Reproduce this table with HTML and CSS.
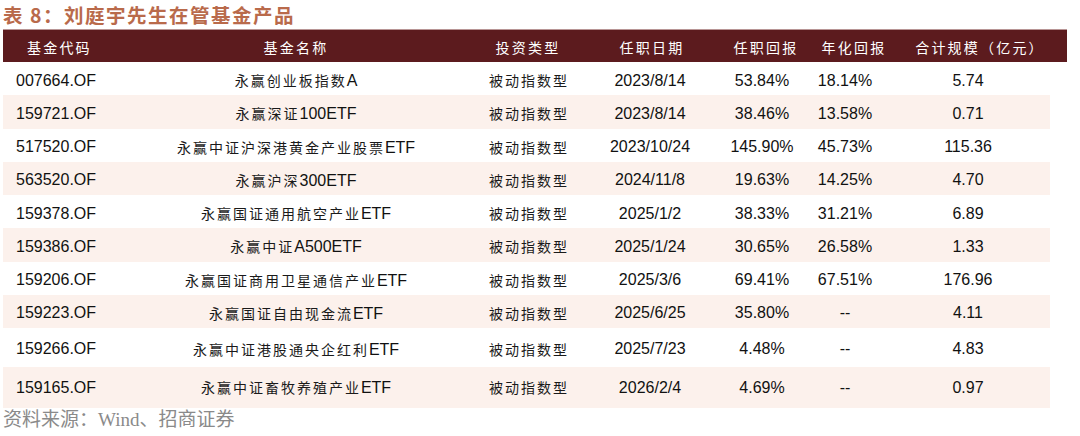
FILE: index.html
```html
<!DOCTYPE html>
<html lang="zh-CN">
<head>
<meta charset="utf-8">
<title>表8</title>
<link rel="stylesheet" href="styles.css">
</head>
<body>
<div class="page">
  <div class="title"><span class="title-no">表 8：</span>刘庭宇先生在管基金产品</div>
  <div class="thead">
    <div class="th th-left">基金代码</div>
    <div class="th">基金名称</div>
    <div class="th">投资类型</div>
    <div class="th">任职日期</div>
    <div class="th">任职回报</div>
    <div class="th">年化回报</div>
    <div class="th">合计规模（亿元）</div>
  </div>
  <div class="tbody">
    <div class="row">
      <div class="td td-left">007664.OF</div>
      <div class="td"><span class="cj">永赢创业板指数</span>A</div>
      <div class="td"><span class="cj">被动指数型</span></div>
      <div class="td">2023/8/14</div>
      <div class="td">53.84%</div>
      <div class="td">18.14%</div>
      <div class="td">5.74</div>
    </div>
    <div class="row stripe">
      <div class="td td-left">159721.OF</div>
      <div class="td"><span class="cj">永赢深证</span>100ETF</div>
      <div class="td"><span class="cj">被动指数型</span></div>
      <div class="td">2023/8/14</div>
      <div class="td">38.46%</div>
      <div class="td">13.58%</div>
      <div class="td">0.71</div>
    </div>
    <div class="row">
      <div class="td td-left">517520.OF</div>
      <div class="td"><span class="cj">永赢中证沪深港黄金产业股票</span>ETF</div>
      <div class="td"><span class="cj">被动指数型</span></div>
      <div class="td">2023/10/24</div>
      <div class="td">145.90%</div>
      <div class="td">45.73%</div>
      <div class="td">115.36</div>
    </div>
    <div class="row stripe">
      <div class="td td-left">563520.OF</div>
      <div class="td"><span class="cj">永赢沪深</span>300ETF</div>
      <div class="td"><span class="cj">被动指数型</span></div>
      <div class="td">2024/11/8</div>
      <div class="td">19.63%</div>
      <div class="td">14.25%</div>
      <div class="td">4.70</div>
    </div>
    <div class="row">
      <div class="td td-left">159378.OF</div>
      <div class="td"><span class="cj">永赢国证通用航空产业</span>ETF</div>
      <div class="td"><span class="cj">被动指数型</span></div>
      <div class="td">2025/1/2</div>
      <div class="td">38.33%</div>
      <div class="td">31.21%</div>
      <div class="td">6.89</div>
    </div>
    <div class="row stripe">
      <div class="td td-left">159386.OF</div>
      <div class="td"><span class="cj">永赢中证</span>A500ETF</div>
      <div class="td"><span class="cj">被动指数型</span></div>
      <div class="td">2025/1/24</div>
      <div class="td">30.65%</div>
      <div class="td">26.58%</div>
      <div class="td">1.33</div>
    </div>
    <div class="row">
      <div class="td td-left">159206.OF</div>
      <div class="td"><span class="cj">永赢国证商用卫星通信产业</span>ETF</div>
      <div class="td"><span class="cj">被动指数型</span></div>
      <div class="td">2025/3/6</div>
      <div class="td">69.41%</div>
      <div class="td">67.51%</div>
      <div class="td">176.96</div>
    </div>
    <div class="row stripe">
      <div class="td td-left">159223.OF</div>
      <div class="td"><span class="cj">永赢国证自由现金流</span>ETF</div>
      <div class="td"><span class="cj">被动指数型</span></div>
      <div class="td">2025/6/25</div>
      <div class="td">35.80%</div>
      <div class="td">--</div>
      <div class="td">4.11</div>
    </div>
    <div class="row row-tall">
      <div class="td td-left">159266.OF</div>
      <div class="td"><span class="cj">永赢中证港股通央企红利</span>ETF</div>
      <div class="td"><span class="cj">被动指数型</span></div>
      <div class="td">2025/7/23</div>
      <div class="td">4.48%</div>
      <div class="td">--</div>
      <div class="td">4.83</div>
    </div>
    <div class="row stripe row-last">
      <div class="td td-left">159165.OF</div>
      <div class="td"><span class="cj">永赢中证畜牧养殖产业</span>ETF</div>
      <div class="td"><span class="cj">被动指数型</span></div>
      <div class="td">2026/2/4</div>
      <div class="td">4.69%</div>
      <div class="td">--</div>
      <div class="td">0.97</div>
    </div>
  </div>
  <div class="source">资料来源：Wind、招商证券</div>
</div>
</body>
</html>
```

FILE: styles.css
```css
html, body {
  margin: 0;
  padding: 0;
  background: #ffffff;
}

.page {
  width: 1080px;
  height: 436px;
  padding-left: 3px;
  box-sizing: border-box;
  overflow: hidden;
}

.title {
  height: 29px;
  padding-top: 3px;
  box-sizing: border-box;
  font-family: "Noto Sans CJK SC", "Liberation Sans", sans-serif;
  font-weight: 700;
  font-size: 19.5px;
  line-height: 24px;
  letter-spacing: 1.5px;
  color: #b96a4b;
  white-space: nowrap;
}

.title-no {
  letter-spacing: 1.5px;
}

.thead {
  display: grid;
  grid-template-columns: 120px 346px 118px 130px 98px 78px 174px;
  width: 1064px;
  height: 33px;
  background: #5c1b1e;
  border-top: 1px solid #b89595;
  box-sizing: border-box;
  align-items: center;
}

.th {
  text-align: center;
  font-family: "Noto Sans CJK SC", sans-serif;
  font-size: 14px;
  letter-spacing: 2.2px;
  color: #ffffff;
  white-space: nowrap;
  padding-top: 1px;
}

.th-left {
  text-align: left;
  padding-left: 24px;
}

.tbody {
  width: 1047px;
}

.row {
  display: grid;
  grid-template-columns: 111px 364px 102px 140px 84px 82px 164px;
  height: 33.25px;
  align-items: center;
  padding-top: 4px;
  box-sizing: border-box;
}

.row-tall {
  height: 39px;
  padding-top: 3px;
}

.row-last {
  height: 41px;
  padding-top: 0;
}

.stripe {
  background: #fcf1ec;
}

.td {
  text-align: center;
  font-family: "Liberation Sans", "Noto Sans CJK SC", sans-serif;
  font-size: 16px;
  line-height: 20px;
  color: #111111;
  white-space: nowrap;
}

.td-left {
  text-align: left;
  padding-left: 13px;
}

.cj {
  font-family: "Noto Sans CJK SC", sans-serif;
  font-size: 14px;
  letter-spacing: 2px;
  color: #1a1a1a;
}

.source {
  padding-top: 0;
  font-family: "Liberation Serif", "Noto Sans CJK SC", serif;
  font-size: 19px;
  line-height: 24px;
  color: #8a8a8a;
  white-space: nowrap;
}
```
